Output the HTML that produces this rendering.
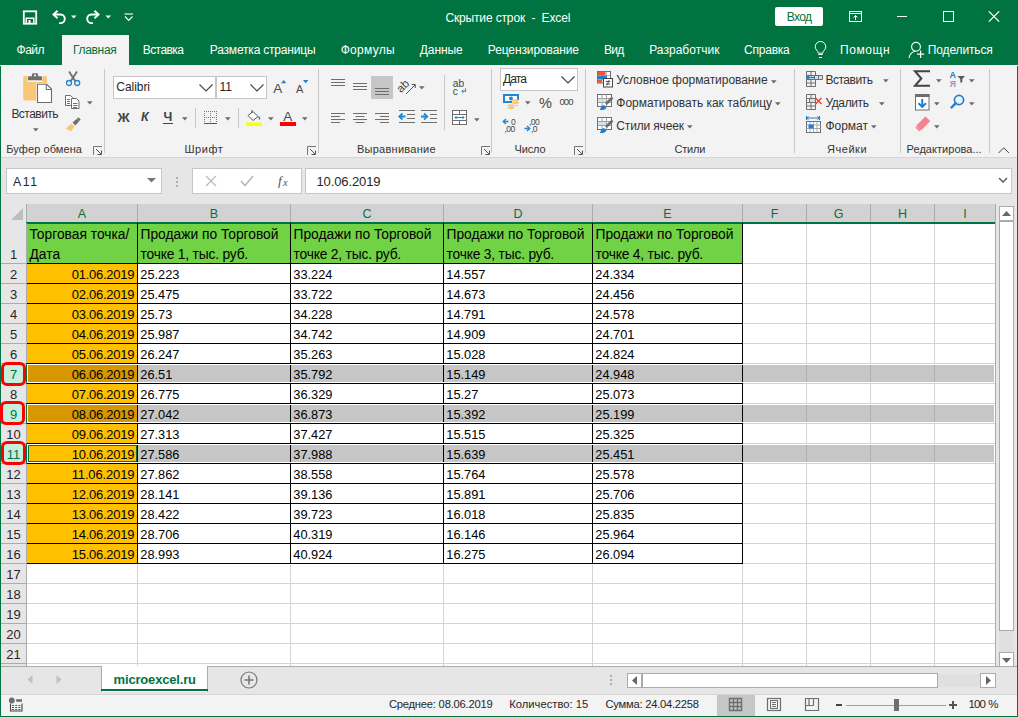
<!DOCTYPE html>
<html><head><meta charset="utf-8"><style>
html,body{margin:0;padding:0;}
body{width:1018px;height:717px;overflow:hidden;position:relative;background:#f3f3f3;font-family:"Liberation Sans", sans-serif;}
body>div, body>svg{position:absolute;box-sizing:border-box;}
.t{white-space:pre;}

</style></head><body>
<div style="left:0px;top:0px;width:1018px;height:65px;background:#017340;"></div>
<div style="left:0px;top:65px;width:1018px;height:92px;background:#f3f3f3;"></div>
<div style="left:0px;top:157px;width:1018px;height:1px;background:#d5d5d5;"></div>
<div style="left:0px;top:158px;width:1018px;height:508px;background:#e6e6e6;"></div>
<div style="left:0px;top:666px;width:1018px;height:28px;background:#e6e6e6;"></div>
<div style="left:0px;top:694px;width:1018px;height:1px;background:#d4d4d4;"></div>
<div style="left:0px;top:695px;width:1018px;height:22px;background:#f3f3f3;"></div>
<div class="t" style="left:445.40px;top:11.84px;font-size:12px;line-height:12px;color:#ffffff;font-weight:normal;font-style:normal;letter-spacing:-0.146px;font-family:'Liberation Sans', sans-serif;">Скрытие строк  -  Excel</div>
<svg style="left:22px;top:10px" width="16" height="15" viewBox="0 0 16 15"><rect x="1.8" y="1.3" width="12.4" height="12.4" fill="none" stroke="#fff" stroke-width="1.8"/><path d="M4.2 13.5V8.2h7.6v5.3" fill="none" stroke="#fff" stroke-width="1.5"/><rect x="6.5" y="10" width="2" height="3.5" fill="#fff"/></svg>
<svg style="left:51px;top:10px" width="28" height="15" viewBox="0 0 28 15"><path d="M2.5 4.5h7a4.3 4.3 0 0 1 0 8.6H8" fill="none" stroke="#fff" stroke-width="1.9"/><path d="M6.5 0.8L2.5 4.5l4 3.7" fill="none" stroke="#fff" stroke-width="1.9"/><path d="M20 5.5h5.5l-2.75 3z" fill="#fff"/></svg>
<svg style="left:85px;top:10px" width="28" height="15" viewBox="0 0 28 15"><path d="M13.5 4.5h-7a4.3 4.3 0 0 0 0 8.6H8" fill="none" stroke="#fff" stroke-width="1.9"/><path d="M9.5 0.8l4 3.7-4 3.7" fill="none" stroke="#fff" stroke-width="1.9"/><path d="M20.5 5.5h5.5l-2.75 3z" fill="#fff"/></svg>
<svg style="left:124px;top:13px" width="10" height="9" viewBox="0 0 10 9"><path d="M0.5 1h8.5" stroke="#fff" stroke-width="1.1"/><path d="M1 3.5l3.75 4 3.75-4" fill="none" stroke="#fff" stroke-width="1.1"/></svg>
<div style="left:775px;top:7px;width:48px;height:19px;background:#fff;border-radius:2px;"></div>
<div class="t" style="left:786.80px;top:10.64px;font-size:12px;line-height:12px;color:#017340;font-weight:normal;font-style:normal;letter-spacing:-0.652px;font-family:'Liberation Sans', sans-serif;">Вход</div>
<svg style="left:849px;top:11px" width="14" height="11" viewBox="0 0 14 11"><rect x="0.5" y="0.5" width="12" height="10" fill="none" stroke="#fff"/><path d="M0.5 2.5h12" stroke="#fff"/><path d="M6.5 9V4.5M4.5 6.5l2-2 2 2" fill="none" stroke="#fff"/></svg>
<div style="left:897px;top:16px;width:10px;height:1px;background:#fff;"></div>
<div style="left:943px;top:11px;width:11px;height:11px;border:1px solid #fff;"></div>
<svg style="left:988px;top:11px" width="12" height="11" viewBox="0 0 12 11"><path d="M0.8 0.3l10.4 10.4M11.2 0.3L0.8 10.7" stroke="#fff" stroke-width="1.1"/></svg>
<div style="left:62px;top:35px;width:67px;height:30px;background:#f3f3f3;"></div>
<div class="t" style="left:16.50px;top:43.84px;font-size:12px;line-height:12px;color:#ffffff;font-weight:normal;font-style:normal;letter-spacing:-0.472px;font-family:'Liberation Sans', sans-serif;">Файл</div>
<div class="t" style="left:73.00px;top:43.84px;font-size:12px;line-height:12px;color:#017340;font-weight:normal;font-style:normal;letter-spacing:-0.315px;font-family:'Liberation Sans', sans-serif;">Главная</div>
<div class="t" style="left:142.70px;top:43.84px;font-size:12px;line-height:12px;color:#ffffff;font-weight:normal;font-style:normal;letter-spacing:-0.552px;font-family:'Liberation Sans', sans-serif;">Вставка</div>
<div class="t" style="left:209.80px;top:43.84px;font-size:12px;line-height:12px;color:#ffffff;font-weight:normal;font-style:normal;letter-spacing:-0.192px;font-family:'Liberation Sans', sans-serif;">Разметка страницы</div>
<div class="t" style="left:340.70px;top:43.84px;font-size:12px;line-height:12px;color:#ffffff;font-weight:normal;font-style:normal;letter-spacing:0.297px;font-family:'Liberation Sans', sans-serif;">Формулы</div>
<div class="t" style="left:419.80px;top:43.84px;font-size:12px;line-height:12px;color:#ffffff;font-weight:normal;font-style:normal;letter-spacing:-0.072px;font-family:'Liberation Sans', sans-serif;">Данные</div>
<div class="t" style="left:487.80px;top:43.84px;font-size:12px;line-height:12px;color:#ffffff;font-weight:normal;font-style:normal;letter-spacing:-0.113px;font-family:'Liberation Sans', sans-serif;">Рецензирование</div>
<div class="t" style="left:604.00px;top:43.84px;font-size:12px;line-height:12px;color:#ffffff;font-weight:normal;font-style:normal;letter-spacing:-0.759px;font-family:'Liberation Sans', sans-serif;">Вид</div>
<div class="t" style="left:649.20px;top:43.84px;font-size:12px;line-height:12px;color:#ffffff;font-weight:normal;font-style:normal;letter-spacing:0.032px;font-family:'Liberation Sans', sans-serif;">Разработчик</div>
<div class="t" style="left:744.00px;top:43.84px;font-size:12px;line-height:12px;color:#ffffff;font-weight:normal;font-style:normal;letter-spacing:-0.213px;font-family:'Liberation Sans', sans-serif;">Справка</div>
<div class="t" style="left:840.00px;top:43.84px;font-size:12px;line-height:12px;color:#ffffff;font-weight:normal;font-style:normal;letter-spacing:0.593px;font-family:'Liberation Sans', sans-serif;">Помощн</div>
<div class="t" style="left:927.80px;top:43.84px;font-size:12px;line-height:12px;color:#ffffff;font-weight:normal;font-style:normal;letter-spacing:-0.141px;font-family:'Liberation Sans', sans-serif;">Поделиться</div>
<svg style="left:814px;top:41px" width="13" height="18" viewBox="0 0 13 18"><path d="M4.3 12.2C4.2 10 1.2 8.6 1.2 5.8a5.3 5.3 0 0 1 10.6 0c0 2.8-3 4.2-3.1 6.4z" fill="none" stroke="#fff" stroke-width="1"/><path d="M4.3 13.5h4.4M5 16.5h3" stroke="#fff" stroke-width="1.1"/></svg>
<svg style="left:908px;top:41px" width="17" height="18" viewBox="0 0 17 18"><circle cx="8" cy="5.8" r="4.4" fill="none" stroke="#fff" stroke-width="1.1"/><path d="M1 17c0.5-3.5 2.8-6 6-6.8" fill="none" stroke="#fff" stroke-width="1.1"/><path d="M12.6 9.5v7.5M9 13.2h7.2" stroke="#fff" stroke-width="1.2"/></svg>
<div style="left:104px;top:69px;width:1px;height:84px;background:#c8c8c8;"></div>
<div style="left:318px;top:69px;width:1px;height:84px;background:#c8c8c8;"></div>
<div style="left:491px;top:69px;width:1px;height:84px;background:#c8c8c8;"></div>
<div style="left:585px;top:69px;width:1px;height:84px;background:#c8c8c8;"></div>
<div style="left:794px;top:69px;width:1px;height:84px;background:#c8c8c8;"></div>
<div style="left:900px;top:69px;width:1px;height:84px;background:#c8c8c8;"></div>
<div style="left:989px;top:69px;width:1px;height:84px;background:#c8c8c8;"></div>
<div class="t" style="left:6.30px;top:143.69px;font-size:11px;line-height:11px;color:#333;font-weight:normal;font-style:normal;letter-spacing:0.086px;font-family:'Liberation Sans', sans-serif;">Буфер обмена</div>
<div class="t" style="left:184.50px;top:143.69px;font-size:11px;line-height:11px;color:#333;font-weight:normal;font-style:normal;letter-spacing:0.524px;font-family:'Liberation Sans', sans-serif;">Шрифт</div>
<div class="t" style="left:356.90px;top:143.69px;font-size:11px;line-height:11px;color:#333;font-weight:normal;font-style:normal;letter-spacing:0.271px;font-family:'Liberation Sans', sans-serif;">Выравнивание</div>
<div class="t" style="left:514.50px;top:143.69px;font-size:11px;line-height:11px;color:#333;font-weight:normal;font-style:normal;letter-spacing:-0.160px;font-family:'Liberation Sans', sans-serif;">Число</div>
<div class="t" style="left:674.40px;top:143.69px;font-size:11px;line-height:11px;color:#333;font-weight:normal;font-style:normal;letter-spacing:-0.151px;font-family:'Liberation Sans', sans-serif;">Стили</div>
<div class="t" style="left:827.10px;top:143.69px;font-size:11px;line-height:11px;color:#333;font-weight:normal;font-style:normal;letter-spacing:0.519px;font-family:'Liberation Sans', sans-serif;">Ячейки</div>
<div class="t" style="left:906.60px;top:143.69px;font-size:11px;line-height:11px;color:#333;font-weight:normal;font-style:normal;letter-spacing:0.035px;font-family:'Liberation Sans', sans-serif;">Редактирова...</div>
<svg style="left:93px;top:146px" width="10" height="10" viewBox="0 0 10 10"><path d="M0.5 9V0.5H9" fill="none" stroke="#777" stroke-width="1"/><path d="M3 3l5 5M4.5 8.5H8.5V4.5" fill="none" stroke="#555" stroke-width="1"/></svg>
<svg style="left:306.5px;top:146px" width="10" height="10" viewBox="0 0 10 10"><path d="M0.5 9V0.5H9" fill="none" stroke="#777" stroke-width="1"/><path d="M3 3l5 5M4.5 8.5H8.5V4.5" fill="none" stroke="#555" stroke-width="1"/></svg>
<svg style="left:480.5px;top:146px" width="10" height="10" viewBox="0 0 10 10"><path d="M0.5 9V0.5H9" fill="none" stroke="#777" stroke-width="1"/><path d="M3 3l5 5M4.5 8.5H8.5V4.5" fill="none" stroke="#555" stroke-width="1"/></svg>
<svg style="left:574px;top:146px" width="10" height="10" viewBox="0 0 10 10"><path d="M0.5 9V0.5H9" fill="none" stroke="#777" stroke-width="1"/><path d="M3 3l5 5M4.5 8.5H8.5V4.5" fill="none" stroke="#555" stroke-width="1"/></svg>
<svg style="left:998px;top:146px" width="12" height="8" viewBox="0 0 12 8"><path d="M0.5 7l5.2-5.2 5.2 5.2" fill="none" stroke="#444" stroke-width="1"/></svg>
<svg style="left:22px;top:72px" width="31" height="32" viewBox="0 0 31 32"><rect x="1.2" y="4" width="23.8" height="24.6" rx="1.5" fill="#f9c77a"/><path d="M5.5 3.2h15v6.8h-15z" fill="#f3f3f3"/><path d="M6 8.2V5.2Q6 4.2 7 4.2H10V2.2Q10 1.2 11 1.2H15Q16 1.2 16 2.2V4.2H19Q20 4.2 20 5.2V8.2z" fill="#6e6e6e"/><rect x="12" y="2.5" width="2" height="1.8" fill="#f3f3f3"/><path d="M14.2 11h11.5l5 5V32H14.2z" fill="#f3f3f3"/><path d="M15.5 12.3h9.2l4.8 4.8V30.5H15.5z" fill="#fff" stroke="#6e6e6e" stroke-width="1.1"/><path d="M24.3 12.3v5.2h5.2" fill="none" stroke="#6e6e6e" stroke-width="1.1"/></svg>
<div class="t" style="left:11.40px;top:107.84px;font-size:12px;line-height:12px;color:#333;font-weight:normal;font-style:normal;letter-spacing:-0.525px;font-family:'Liberation Sans', sans-serif;">Вставить</div>
<svg style="left:33px;top:128px" width="6" height="4" viewBox="0 0 6 4"><path d="M0 0.3h5.6L2.8 3.4z" fill="#6a6a6a"/></svg>
<svg style="left:65px;top:70px" width="16" height="17" viewBox="0 0 16 17"><path d="M4 1.5l6.5 10M12 1.5l-6.5 10" stroke="#6e6e6e" stroke-width="1.8"/><circle cx="4" cy="13" r="2.5" fill="none" stroke="#1e87d6" stroke-width="1.3"/><circle cx="12.2" cy="13" r="2.5" fill="none" stroke="#1e87d6" stroke-width="1.3"/></svg>
<svg style="left:64px;top:94px" width="17" height="16" viewBox="0 0 17 16"><path d="M1.5 1.5h5l2 2V11.5h-7z" fill="#fff" stroke="#6e6e6e"/><path d="M3 5.5h3M3 7.5h3M3 9.5h3" stroke="#1e87d6"/><path d="M7.5 4.5h5l2.5 2.5v7.5h-7.5z" fill="#fff" stroke="#6e6e6e"/><path d="M9 9.5h4.5M9 11.5h4.5M9 13.5h4" stroke="#1e87d6"/></svg>
<svg style="left:87px;top:101px" width="6" height="4" viewBox="0 0 6 4"><path d="M0 0.3h5.6L2.8 3.4z" fill="#6a6a6a"/></svg>
<svg style="left:65px;top:117px" width="17" height="16" viewBox="0 0 17 16"><path d="M12 1.5l1.5-1.2 2.2 2.2-1.2 1.5z" fill="#6e6e6e"/><path d="M7.5 5.5l4.5-3.8 2.3 2.3L10.5 8.5z" fill="#6e6e6e"/><path d="M6.5 6.5l3 3L6 14.5 0.8 11.5z" fill="#f9c77a"/></svg>
<div style="left:113px;top:76px;width:103px;height:23px;background:#fff;border:1px solid #c6c6c6;"></div>
<div style="left:216px;top:76px;width:51px;height:23px;background:#fff;border:1px solid #c6c6c6;"></div>
<div class="t" style="left:116.30px;top:81.44px;font-size:12px;line-height:12px;color:#262626;font-weight:normal;font-style:normal;letter-spacing:-0.053px;font-family:'Liberation Sans', sans-serif;">Calibri</div>
<div class="t" style="left:219.50px;top:81.44px;font-size:12px;line-height:12px;color:#262626;font-weight:normal;font-style:normal;font-family:'Liberation Sans', sans-serif;">11</div>
<svg style="left:199px;top:84px" width="14" height="8" viewBox="0 0 14 8"><path d="M0.5 0.5l6.5 6.5 6.5-6.5" fill="none" stroke="#444" stroke-width="1.1"/></svg>
<svg style="left:250px;top:84px" width="14" height="8" viewBox="0 0 14 8"><path d="M0.5 0.5l6.5 6.5 6.5-6.5" fill="none" stroke="#444" stroke-width="1.1"/></svg>
<div class="t" style="left:273.30px;top:81.57px;font-size:13.5px;line-height:13.5px;color:#4a4a4a;font-weight:normal;font-style:normal;font-family:'Liberation Sans', sans-serif;">A</div>
<svg style="left:281px;top:80px" width="6" height="4" viewBox="0 0 6 4"><path d="M0 3.2h5.4L2.7 0z" fill="#1e7fd2"/></svg>
<div class="t" style="left:296.00px;top:83.69px;font-size:11px;line-height:11px;color:#4a4a4a;font-weight:normal;font-style:normal;font-family:'Liberation Sans', sans-serif;">A</div>
<svg style="left:303px;top:80px" width="6" height="4" viewBox="0 0 6 4"><path d="M0 0h5.4L2.7 3.2z" fill="#1e7fd2"/></svg>
<div class="t" style="left:117.50px;top:110.57px;font-size:13.5px;line-height:13.5px;color:#444;font-weight:bold;font-style:normal;font-family:'Liberation Sans', sans-serif;">Ж</div>
<div class="t" style="left:141.00px;top:111.42px;font-size:12.5px;line-height:12.5px;color:#444;font-weight:bold;font-style:italic;font-family:'Liberation Sans', sans-serif;">К</div>
<div class="t" style="left:163.50px;top:111.42px;font-size:12.5px;line-height:12.5px;color:#444;font-weight:bold;font-style:normal;font-family:'Liberation Sans', sans-serif;">Ч</div>
<div style="left:163px;top:123px;width:10px;height:1px;background:#444;"></div>
<svg style="left:182px;top:117px" width="6" height="4" viewBox="0 0 6 4"><path d="M0 0.3h5.6L2.8 3.4z" fill="#6a6a6a"/></svg>
<div style="left:195px;top:108px;width:1px;height:20px;background:#c8c8c8;"></div>
<svg style="left:204px;top:111px" width="14" height="14" viewBox="0 0 14 14"><g fill="#777"><rect x="0" y="0" width="1" height="1"/><rect x="0" y="0" width="1" height="1"/><rect x="0" y="6" width="1" height="1"/><rect x="6" y="0" width="1" height="1"/><rect x="0" y="12" width="1" height="1"/><rect x="12" y="0" width="1" height="1"/><rect x="2" y="0" width="1" height="1"/><rect x="0" y="2" width="1" height="1"/><rect x="2" y="6" width="1" height="1"/><rect x="6" y="2" width="1" height="1"/><rect x="2" y="12" width="1" height="1"/><rect x="12" y="2" width="1" height="1"/><rect x="4" y="0" width="1" height="1"/><rect x="0" y="4" width="1" height="1"/><rect x="4" y="6" width="1" height="1"/><rect x="6" y="4" width="1" height="1"/><rect x="4" y="12" width="1" height="1"/><rect x="12" y="4" width="1" height="1"/><rect x="6" y="0" width="1" height="1"/><rect x="0" y="6" width="1" height="1"/><rect x="6" y="6" width="1" height="1"/><rect x="6" y="6" width="1" height="1"/><rect x="6" y="12" width="1" height="1"/><rect x="12" y="6" width="1" height="1"/><rect x="8" y="0" width="1" height="1"/><rect x="0" y="8" width="1" height="1"/><rect x="8" y="6" width="1" height="1"/><rect x="6" y="8" width="1" height="1"/><rect x="8" y="12" width="1" height="1"/><rect x="12" y="8" width="1" height="1"/><rect x="10" y="0" width="1" height="1"/><rect x="0" y="10" width="1" height="1"/><rect x="10" y="6" width="1" height="1"/><rect x="6" y="10" width="1" height="1"/><rect x="10" y="12" width="1" height="1"/><rect x="12" y="10" width="1" height="1"/><rect x="12" y="0" width="1" height="1"/><rect x="0" y="12" width="1" height="1"/><rect x="12" y="6" width="1" height="1"/><rect x="6" y="12" width="1" height="1"/><rect x="12" y="12" width="1" height="1"/><rect x="12" y="12" width="1" height="1"/></g><path d="M0 12.5h13" stroke="#555"/></svg>
<svg style="left:225px;top:117px" width="6" height="4" viewBox="0 0 6 4"><path d="M0 0.3h5.6L2.8 3.4z" fill="#6a6a6a"/></svg>
<div style="left:238px;top:108px;width:1px;height:20px;background:#c8c8c8;"></div>
<svg style="left:245px;top:109px" width="18" height="18" viewBox="0 0 18 18"><path d="M7 1v3M3 6.5l5-4 5 5-5 4z" fill="#fff" stroke="#555" stroke-width="1"/><path d="M13.5 7.5c1 1 1.5 2 1 3" stroke="#2b88d8" stroke-width="1.6" fill="none"/><rect x="1" y="13.5" width="16" height="3.5" fill="#ffff00"/></svg>
<svg style="left:267.5px;top:117px" width="6" height="4" viewBox="0 0 6 4"><path d="M0 0.3h5.6L2.8 3.4z" fill="#6a6a6a"/></svg>
<div class="t" style="left:283.20px;top:110.07px;font-size:13.5px;line-height:13.5px;color:#4a4a4a;font-weight:normal;font-style:normal;font-family:'Liberation Sans', sans-serif;">A</div>
<div style="left:280px;top:122px;width:16px;height:4px;background:#ff0000;"></div>
<svg style="left:301.5px;top:117px" width="6" height="4" viewBox="0 0 6 4"><path d="M0 0.3h5.6L2.8 3.4z" fill="#6a6a6a"/></svg>
<svg style="left:331px;top:76px" width="16" height="20" viewBox="0 0 16 20"><path d="M0 3.5h14M0 6.5h14M0 9.5h14" stroke="#6e6e6e" stroke-width="1" fill="none"/></svg>
<svg style="left:353px;top:80px" width="16" height="20" viewBox="0 0 16 20"><path d="M0 3.5h14M0 6.5h14M0 9.5h14" stroke="#6e6e6e" stroke-width="1" fill="none"/></svg>
<div style="left:371px;top:76px;width:22px;height:23px;background:#c6c6c6;"></div>
<svg style="left:375px;top:85px" width="16" height="20" viewBox="0 0 16 20"><path d="M0 3.5h14M0 6.5h14M0 9.5h14" stroke="#6e6e6e" stroke-width="1" fill="none"/></svg>
<svg style="left:394px;top:74px" width="34" height="23" viewBox="0 0 34 23"><text x="2" y="15" font-family="Liberation Sans" font-size="11.5" fill="#444" transform="rotate(-45 9.5 11)" letter-spacing="-0.2">ab</text><path d="M12 20L21 11" stroke="#555" stroke-width="1" fill="none"/><path d="M17.8 10.5h3.5v3.5" stroke="#555" stroke-width="1" fill="none"/></svg>
<svg style="left:419px;top:85.5px" width="6" height="4" viewBox="0 0 6 4"><path d="M0 0.3h5.6L2.8 3.4z" fill="#6a6a6a"/></svg>
<svg style="left:331px;top:110px" width="16" height="20" viewBox="0 0 16 20"><path d="M0 3.5h14M0 6.5h9M0 9.5h14M0 12.5h9" stroke="#6e6e6e" stroke-width="1" fill="none"/></svg>
<svg style="left:353px;top:110px" width="16" height="20" viewBox="0 0 16 20"><path d="M0 3.5h14M2.5 6.5h9M0 9.5h14M2.5 12.5h9" stroke="#6e6e6e" stroke-width="1" fill="none"/></svg>
<svg style="left:375px;top:110px" width="16" height="20" viewBox="0 0 16 20"><path d="M0 3.5h14M5 6.5h9M0 9.5h14M5 12.5h9" stroke="#6e6e6e" stroke-width="1" fill="none"/></svg>
<svg style="left:398px;top:110px" width="18" height="16" viewBox="0 0 18 16"><path d="M1 0.5h16M9 4.5h8M9 8.5h8M1 12.5h16" stroke="#6e6e6e" fill="none"/><path d="M2 6.5h5.5" stroke="#1e87d6" stroke-width="2" fill="none"/><path d="M4.5 3.5L1.2 6.5l3.3 3" stroke="#1e87d6" stroke-width="1.7" fill="none"/></svg>
<svg style="left:420px;top:110px" width="18" height="16" viewBox="0 0 18 16"><path d="M1 0.5h16M10 4.5h7M10 8.5h7M1 12.5h16" stroke="#6e6e6e" fill="none"/><path d="M1 6.5h5.5" stroke="#1e87d6" stroke-width="2" fill="none"/><path d="M4 3.5l3.3 3-3.3 3" stroke="#1e87d6" stroke-width="1.7" fill="none"/></svg>
<div style="left:444px;top:75px;width:1px;height:55px;background:#c8c8c8;"></div>
<svg style="left:452px;top:78px" width="17" height="18" viewBox="0 0 17 18"><text x="0.8" y="9" font-family="Liberation Sans" font-size="10.2" fill="#444" letter-spacing="0">ab</text><text x="0.8" y="16.6" font-family="Liberation Sans" font-size="10.2" fill="#444">c</text><path d="M13.5 10.5v2.8h-3.5" stroke="#1e7fd2" stroke-width="1.1" fill="none"/><path d="M11.3 11.9L9.8 13.3l1.5 1.5" stroke="#1e7fd2" stroke-width="1" fill="none"/></svg>
<svg style="left:451px;top:109px" width="17" height="17" viewBox="0 0 17 17"><rect x="1.5" y="1.5" width="14" height="14" fill="#fff" stroke="#6e6e6e"/><path d="M1.5 5.5h14M1.5 11.5h14M8.5 1.5v4M8.5 11.5v4" stroke="#6e6e6e"/><path d="M4 8.5h9" stroke="#1e87d6" stroke-width="1.1"/><path d="M5.5 7L4 8.5 5.5 10M11.5 7l1.5 1.5-1.5 1.5" stroke="#1e87d6" fill="none"/></svg>
<svg style="left:474px;top:117.5px" width="6" height="4" viewBox="0 0 6 4"><path d="M0 0.3h5.6L2.8 3.4z" fill="#6a6a6a"/></svg>
<div style="left:500px;top:68px;width:78px;height:23px;background:#fff;border:1px solid #c6c6c6;"></div>
<div class="t" style="left:503.00px;top:73.34px;font-size:12px;line-height:12px;color:#262626;font-weight:normal;font-style:normal;letter-spacing:-0.859px;font-family:'Liberation Sans', sans-serif;">Дата</div>
<svg style="left:561px;top:76px" width="14" height="8" viewBox="0 0 14 8"><path d="M0.5 0.5l6.5 6.5 6.5-6.5" fill="none" stroke="#444" stroke-width="1.1"/></svg>
<svg style="left:503px;top:94px" width="17" height="17" viewBox="0 0 17 17"><path d="M0 0h16v9H0z" fill="#1e87d6"/><path d="M2 2h12v5H2z" fill="#fff"/><circle cx="8" cy="4.5" r="2" fill="#1e87d6"/><path d="M9 6h8v7H9z" fill="#f3f3f3"/><ellipse cx="12.5" cy="6.5" rx="3.5" ry="1.2" fill="#f9c77a"/><ellipse cx="12.5" cy="8.8" rx="3.5" ry="1.2" fill="#f9c77a"/><ellipse cx="8" cy="11.5" rx="3.5" ry="1.2" fill="#f9c77a"/><ellipse cx="8" cy="13.8" rx="3.5" ry="1.2" fill="#f9c77a"/><path d="M12 11.5h3.5" stroke="#f9c77a" stroke-width="1.2"/></svg>
<svg style="left:525px;top:101px" width="6" height="4" viewBox="0 0 6 4"><path d="M0 0.3h5.6L2.8 3.4z" fill="#6a6a6a"/></svg>
<div class="t" style="left:539.00px;top:95.73px;font-size:14.5px;line-height:14.5px;color:#444;font-weight:normal;font-style:normal;font-family:'Liberation Sans', sans-serif;">%</div>
<div class="t" style="left:559.50px;top:96.96px;font-size:9.5px;line-height:9.5px;color:#444;font-weight:normal;font-style:normal;letter-spacing:-0.930px;font-family:'Liberation Sans', sans-serif;">000</div>
<svg style="left:502px;top:117px" width="18" height="17" viewBox="0 0 18 17"><text x="9" y="8" font-family="Liberation Sans" font-size="8.5" fill="#444">0</text><text x="2.5" y="15" font-family="Liberation Sans" font-size="8.5" fill="#444" letter-spacing="-0.5">,00</text><path d="M1.5 4.5h5" stroke="#1e87d6" stroke-width="1.6"/><path d="M4 2L1.3 4.5 4 7" stroke="#1e87d6" stroke-width="1.4" fill="none"/></svg>
<svg style="left:524px;top:117px" width="18" height="17" viewBox="0 0 18 17"><text x="5" y="8" font-family="Liberation Sans" font-size="8.5" fill="#444" letter-spacing="-0.5">,00</text><text x="7" y="15" font-family="Liberation Sans" font-size="8.5" fill="#444" letter-spacing="-0.5">,0</text><path d="M0.5 11.5h5" stroke="#1e87d6" stroke-width="1.6"/><path d="M3 9l2.7 2.5L3 14" stroke="#1e87d6" stroke-width="1.4" fill="none"/></svg>
<div class="t" style="left:616.30px;top:74.34px;font-size:12px;line-height:12px;color:#333;font-weight:normal;font-style:normal;letter-spacing:-0.058px;font-family:'Liberation Sans', sans-serif;">Условное форматирование</div>
<svg style="left:770.8px;top:79.5px" width="6" height="4" viewBox="0 0 6 4"><path d="M0 0.3h5.6L2.8 3.4z" fill="#6a6a6a"/></svg>
<div class="t" style="left:616.30px;top:97.34px;font-size:12px;line-height:12px;color:#333;font-weight:normal;font-style:normal;letter-spacing:-0.018px;font-family:'Liberation Sans', sans-serif;">Форматировать как таблицу</div>
<svg style="left:775px;top:102px" width="6" height="4" viewBox="0 0 6 4"><path d="M0 0.3h5.6L2.8 3.4z" fill="#6a6a6a"/></svg>
<div class="t" style="left:616.30px;top:120.34px;font-size:12px;line-height:12px;color:#333;font-weight:normal;font-style:normal;letter-spacing:-0.157px;font-family:'Liberation Sans', sans-serif;">Стили ячеек</div>
<svg style="left:687.4px;top:125px" width="6" height="4" viewBox="0 0 6 4"><path d="M0 0.3h5.6L2.8 3.4z" fill="#6a6a6a"/></svg>
<svg style="left:596px;top:70px" width="18" height="18" viewBox="0 0 18 18"><rect x="1.5" y="1.5" width="13" height="11.5" fill="#fff" stroke="#6e6e6e"/><path d="M6 1.5v11.5M10.5 1.5v11.5M1.5 5.5h13M1.5 9.5h13" stroke="#9a9a9a" stroke-width="0.8"/><rect x="2" y="2" width="7.5" height="3.3" fill="#f0553a"/><rect x="2" y="5.8" width="9" height="3.3" fill="#1e7fd2"/><rect x="2" y="9.8" width="4" height="3" fill="#f0553a"/><rect x="7.5" y="8.5" width="9" height="8.5" fill="#fff" stroke="#444"/><path d="M9.8 11.5h4.5M9.8 14h4.5M13.2 10l-2.3 5.5" stroke="#444" stroke-width="0.9"/></svg>
<svg style="left:596px;top:93px" width="18" height="18" viewBox="0 0 18 18"><rect x="1.5" y="1.5" width="14" height="12" fill="#fff" stroke="#6e6e6e"/><path d="M1.5 5.5h14M1.5 9.5h14M6 1.5v12M10.5 1.5v12" stroke="#9a9a9a" stroke-width="0.9"/><rect x="6.5" y="6" width="3.5" height="3" fill="#cfe3ef"/><rect x="2" y="6" width="3.5" height="3" fill="#cfe3ef"/><path d="M16.5 4.5L10 11" stroke="#6e6e6e" stroke-width="2.6"/><path d="M4 17c0.5-3 2-4.5 4-5l2.5 2.5c-1 2-3.5 2.8-6.5 2.5z" fill="#1e7fd2"/></svg>
<svg style="left:596px;top:116px" width="18" height="18" viewBox="0 0 18 18"><rect x="1.5" y="1.5" width="14" height="12" fill="#fff" stroke="#6e6e6e"/><path d="M1.5 5.5h14M1.5 9.5h14M6 1.5v12M10.5 1.5v12" stroke="#9a9a9a" stroke-width="0.9"/><rect x="6.5" y="6" width="3.5" height="3" fill="#cfe3ef"/><rect x="2" y="6" width="3.5" height="3" fill="#cfe3ef"/><path d="M16.5 4.5L10 11" stroke="#6e6e6e" stroke-width="2.6"/><path d="M4 17c0.5-3 2-4.5 4-5l2.5 2.5c-1 2-3.5 2.8-6.5 2.5z" fill="#1e7fd2"/></svg>
<div class="t" style="left:825.40px;top:74.34px;font-size:12px;line-height:12px;color:#333;font-weight:normal;font-style:normal;letter-spacing:-0.482px;font-family:'Liberation Sans', sans-serif;">Вставить</div>
<svg style="left:883px;top:79px" width="6" height="4" viewBox="0 0 6 4"><path d="M0 0.3h5.6L2.8 3.4z" fill="#6a6a6a"/></svg>
<div class="t" style="left:825.40px;top:97.34px;font-size:12px;line-height:12px;color:#333;font-weight:normal;font-style:normal;letter-spacing:-0.371px;font-family:'Liberation Sans', sans-serif;">Удалить</div>
<svg style="left:879px;top:101.5px" width="6" height="4" viewBox="0 0 6 4"><path d="M0 0.3h5.6L2.8 3.4z" fill="#6a6a6a"/></svg>
<div class="t" style="left:825.40px;top:120.34px;font-size:12px;line-height:12px;color:#333;font-weight:normal;font-style:normal;letter-spacing:-0.008px;font-family:'Liberation Sans', sans-serif;">Формат</div>
<svg style="left:871px;top:124.5px" width="6" height="4" viewBox="0 0 6 4"><path d="M0 0.3h5.6L2.8 3.4z" fill="#6a6a6a"/></svg>
<svg style="left:805px;top:70px" width="18" height="18" viewBox="0 0 18 18"><path d="M1.5 1.5h9v4h-9zM1.5 5.5v4h9M1.5 9.5v7h9v-7M1.5 13h9M6 1.5v4M6 9.5v7" fill="none" stroke="#6e6e6e"/><path d="M9.5 5.5h8v4h-8z" fill="#cfe3ef" stroke="#6e6e6e"/><path d="M13.5 5.5v4" stroke="#6e6e6e"/><path d="M2 7.5h7" stroke="#1e7fd2" stroke-width="1.6"/><path d="M4.5 5L2 7.5 4.5 10" stroke="#1e7fd2" stroke-width="1.5" fill="none"/></svg>
<svg style="left:805px;top:93px" width="18" height="18" viewBox="0 0 18 18"><path d="M1.5 1.5h9v4h-9zM1.5 5.5v4h9M1.5 9.5v7h9v-7M1.5 13h9M6 1.5v4M6 9.5v7" fill="none" stroke="#6e6e6e"/><path d="M4.5 5.5h6v4h-6z" fill="#cfe3ef" stroke="#6e6e6e"/><path d="M10.5 5l6 6M16.5 5l-6 6" stroke="#f0443a" stroke-width="1.5"/></svg>
<svg style="left:805px;top:116px" width="18" height="18" viewBox="0 0 18 18"><path d="M1.5 0v4M14.5 0v4M2 2h12" stroke="#1e7fd2" stroke-width="1.1"/><path d="M3.5 0.3L1.8 2l1.7 1.7M12.5 0.3L14.2 2l-1.7 1.7" stroke="#1e7fd2" fill="none"/><rect x="1.5" y="5.5" width="14" height="11" fill="#fff" stroke="#6e6e6e"/><path d="M1.5 9h14M1.5 12.5h14M5 5.5v11M8.5 5.5v11M12 5.5v11" stroke="#9a9a9a" stroke-width="0.8"/><rect x="3.5" y="8.5" width="5" height="4" fill="#1e7fd2"/></svg>
<svg style="left:913px;top:70px" width="17" height="17" viewBox="0 0 17 17"><path d="M16 2.2V1.2H2l6.3 7.3L2 15.8h14V14.8" fill="none" stroke="#444" stroke-width="2"/></svg>
<svg style="left:935.5px;top:78.5px" width="6" height="4" viewBox="0 0 6 4"><path d="M0 0.3h5.6L2.8 3.4z" fill="#6a6a6a"/></svg>
<svg style="left:949px;top:70px" width="17" height="18" viewBox="0 0 17 18"><text x="0.5" y="8" font-family="Liberation Sans" font-weight="bold" font-size="9" fill="#1e7fd2">A</text><text x="0.8" y="17" font-family="Liberation Sans" font-weight="bold" font-size="8.5" fill="#a58ac0">Я</text><path d="M8.5 6h7.5l-2.7 3v3.5l-2 0V9z" fill="#5a5a5a"/></svg>
<svg style="left:969px;top:78.5px" width="6" height="4" viewBox="0 0 6 4"><path d="M0 0.3h5.6L2.8 3.4z" fill="#6a6a6a"/></svg>
<svg style="left:914px;top:93px" width="16" height="18" viewBox="0 0 16 18"><rect x="1.5" y="1.5" width="13.5" height="15.5" fill="#fff" stroke="#6e6e6e"/><rect x="1" y="1" width="14.5" height="3" fill="#6e6e6e"/><path d="M8.2 6v8" stroke="#1e7fd2" stroke-width="2"/><path d="M4.5 10.2l3.7 3.7 3.7-3.7" stroke="#1e7fd2" stroke-width="2" fill="none"/></svg>
<svg style="left:934px;top:101.5px" width="6" height="4" viewBox="0 0 6 4"><path d="M0 0.3h5.6L2.8 3.4z" fill="#6a6a6a"/></svg>
<svg style="left:950px;top:94px" width="15" height="15" viewBox="0 0 15 15"><circle cx="9" cy="6" r="4.6" fill="none" stroke="#1e7fd2" stroke-width="1.7"/><path d="M5.8 9.2L1.5 13.5" stroke="#1e7fd2" stroke-width="2.4" stroke-linecap="round"/></svg>
<svg style="left:969px;top:101.5px" width="6" height="4" viewBox="0 0 6 4"><path d="M0 0.3h5.6L2.8 3.4z" fill="#6a6a6a"/></svg>
<svg style="left:914px;top:116px" width="17" height="16" viewBox="0 0 17 16"><path d="M11.5 1.2l4 4-8.5 8.5-4-4z" fill="#f4838f" stroke="#f4838f" stroke-linejoin="round" stroke-width="1.2"/><path d="M2.5 10.2l4 4-1.2 1.2-4-4z" fill="#f4838f"/></svg>
<svg style="left:934px;top:124.5px" width="6" height="4" viewBox="0 0 6 4"><path d="M0 0.3h5.6L2.8 3.4z" fill="#6a6a6a"/></svg>
<div style="left:6px;top:168px;width:156px;height:26px;background:#fff;border:1px solid #c6c6c6;"></div>
<div class="t" style="left:13.00px;top:175.89px;font-size:12.3px;line-height:12.3px;color:#262626;font-weight:normal;font-style:normal;letter-spacing:1.516px;font-family:'Liberation Sans', sans-serif;">A11</div>
<svg style="left:147px;top:178px" width="9" height="5" viewBox="0 0 9 5"><path d="M0 0h9L4.5 4.5z" fill="#777"/></svg>
<div style="left:176px;top:177px;width:2px;height:2px;background:#9b9b9b;border-radius:1px;"></div>
<div style="left:176px;top:181px;width:2px;height:2px;background:#9b9b9b;border-radius:1px;"></div>
<div style="left:176px;top:185px;width:2px;height:2px;background:#9b9b9b;border-radius:1px;"></div>
<div style="left:192px;top:168px;width:110px;height:26px;background:#fff;border:1px solid #c6c6c6;"></div>
<svg style="left:205px;top:175px" width="12" height="12" viewBox="0 0 12 12"><path d="M1 1l10 10M11 1L1 11" stroke="#b8b8b8" stroke-width="1.2"/></svg>
<svg style="left:240px;top:175px" width="14" height="12" viewBox="0 0 14 12"><path d="M1 6l4 4.5L13 1" stroke="#b8b8b8" stroke-width="1.6" fill="none"/></svg>
<div class="t" style="left:278.00px;top:174.07px;font-size:13.5px;line-height:13.5px;color:#555;font-weight:normal;font-style:italic;font-family:'Liberation Serif', serif;">f</div>
<div class="t" style="left:283.00px;top:177.61px;font-size:10.5px;line-height:10.5px;color:#555;font-weight:normal;font-style:italic;font-family:'Liberation Serif', serif;">x</div>
<div style="left:305px;top:168px;width:707px;height:26px;background:#fff;border:1px solid #c6c6c6;"></div>
<div class="t" style="left:316.50px;top:175.30px;font-size:13px;line-height:13px;color:#262626;font-weight:normal;font-style:normal;letter-spacing:-0.120px;font-family:'Liberation Sans', sans-serif;">10.06.2019</div>
<svg style="left:998px;top:177px" width="10" height="6" viewBox="0 0 10 6"><path d="M1 1l4 4 4-4" stroke="#666" stroke-width="1.6" fill="none"/></svg>
<div style="left:27px;top:224px;width:968px;height:442px;background:#fff;"></div>
<div style="left:1px;top:204px;width:994px;height:18px;background:#d2d2d2;"></div>
<div style="left:1px;top:204px;width:25px;height:18px;background:#e6e6e6;"></div>
<svg style="left:11px;top:208px" width="13" height="12" viewBox="0 0 13 12"><path d="M12 0V12H0z" fill="#bdbdbd"/></svg>
<div style="left:26px;top:222px;width:969px;height:2px;background:#017340;"></div>
<div style="left:1px;top:223px;width:25px;height:1px;background:#ababab;"></div>
<div style="left:137px;top:204px;width:1px;height:18px;background:#ababab;"></div>
<div class="t" style="left:77.83px;top:208.22px;font-size:12.5px;line-height:12.5px;color:#0f6e3f;font-weight:normal;font-style:normal;font-family:'Liberation Sans', sans-serif;">A</div>
<div style="left:290px;top:204px;width:1px;height:18px;background:#ababab;"></div>
<div class="t" style="left:209.83px;top:208.22px;font-size:12.5px;line-height:12.5px;color:#0f6e3f;font-weight:normal;font-style:normal;font-family:'Liberation Sans', sans-serif;">B</div>
<div style="left:443px;top:204px;width:1px;height:18px;background:#ababab;"></div>
<div class="t" style="left:362.48px;top:208.22px;font-size:12.5px;line-height:12.5px;color:#0f6e3f;font-weight:normal;font-style:normal;font-family:'Liberation Sans', sans-serif;">C</div>
<div style="left:592px;top:204px;width:1px;height:18px;background:#ababab;"></div>
<div class="t" style="left:513.48px;top:208.22px;font-size:12.5px;line-height:12.5px;color:#0f6e3f;font-weight:normal;font-style:normal;font-family:'Liberation Sans', sans-serif;">D</div>
<div style="left:742px;top:204px;width:1px;height:18px;background:#ababab;"></div>
<div class="t" style="left:663.33px;top:208.22px;font-size:12.5px;line-height:12.5px;color:#0f6e3f;font-weight:normal;font-style:normal;font-family:'Liberation Sans', sans-serif;">E</div>
<div style="left:806px;top:204px;width:1px;height:18px;background:#ababab;"></div>
<div class="t" style="left:770.68px;top:208.22px;font-size:12.5px;line-height:12.5px;color:#0f6e3f;font-weight:normal;font-style:normal;font-family:'Liberation Sans', sans-serif;">F</div>
<div style="left:870px;top:204px;width:1px;height:18px;background:#ababab;"></div>
<div class="t" style="left:833.63px;top:208.22px;font-size:12.5px;line-height:12.5px;color:#0f6e3f;font-weight:normal;font-style:normal;font-family:'Liberation Sans', sans-serif;">G</div>
<div style="left:934px;top:204px;width:1px;height:18px;background:#ababab;"></div>
<div class="t" style="left:897.98px;top:208.22px;font-size:12.5px;line-height:12.5px;color:#0f6e3f;font-weight:normal;font-style:normal;font-family:'Liberation Sans', sans-serif;">H</div>
<div style="left:995px;top:204px;width:1px;height:18px;background:#ababab;"></div>
<div class="t" style="left:963.26px;top:208.22px;font-size:12.5px;line-height:12.5px;color:#0f6e3f;font-weight:normal;font-style:normal;font-family:'Liberation Sans', sans-serif;">I</div>
<div style="left:26px;top:204px;width:1px;height:18px;background:#ababab;"></div>
<div style="left:1px;top:223px;width:25px;height:443px;background:#e6e6e6;"></div>
<div style="left:26px;top:223px;width:1px;height:443px;background:#ababab;"></div>
<div style="left:1px;top:263px;width:25px;height:1px;background:#ababab;"></div>
<div class="t" style="left:9.88px;top:248.00px;font-size:13px;line-height:13px;color:#262626;font-weight:normal;font-style:normal;font-family:'Liberation Sans', sans-serif;">1</div>
<div style="left:1px;top:283px;width:25px;height:1px;background:#ababab;"></div>
<div class="t" style="left:9.88px;top:267.50px;font-size:13px;line-height:13px;color:#262626;font-weight:normal;font-style:normal;font-family:'Liberation Sans', sans-serif;">2</div>
<div style="left:1px;top:303px;width:25px;height:1px;background:#ababab;"></div>
<div class="t" style="left:9.88px;top:287.50px;font-size:13px;line-height:13px;color:#262626;font-weight:normal;font-style:normal;font-family:'Liberation Sans', sans-serif;">3</div>
<div style="left:1px;top:323px;width:25px;height:1px;background:#ababab;"></div>
<div class="t" style="left:9.88px;top:307.50px;font-size:13px;line-height:13px;color:#262626;font-weight:normal;font-style:normal;font-family:'Liberation Sans', sans-serif;">4</div>
<div style="left:1px;top:343px;width:25px;height:1px;background:#ababab;"></div>
<div class="t" style="left:9.88px;top:327.50px;font-size:13px;line-height:13px;color:#262626;font-weight:normal;font-style:normal;font-family:'Liberation Sans', sans-serif;">5</div>
<div style="left:1px;top:363px;width:25px;height:1px;background:#ababab;"></div>
<div class="t" style="left:9.88px;top:347.50px;font-size:13px;line-height:13px;color:#262626;font-weight:normal;font-style:normal;font-family:'Liberation Sans', sans-serif;">6</div>
<div style="left:1px;top:383px;width:25px;height:1px;background:#ababab;"></div>
<div style="left:1px;top:364px;width:25px;height:19px;background:#c6efe0;"></div>
<div style="left:26px;top:363px;width:1px;height:21px;background:#017340;"></div>
<div class="t" style="left:9.88px;top:367.50px;font-size:13px;line-height:13px;color:#017340;font-weight:normal;font-style:normal;font-family:'Liberation Sans', sans-serif;">7</div>
<div style="left:1px;top:403px;width:25px;height:1px;background:#ababab;"></div>
<div class="t" style="left:9.88px;top:387.50px;font-size:13px;line-height:13px;color:#262626;font-weight:normal;font-style:normal;font-family:'Liberation Sans', sans-serif;">8</div>
<div style="left:1px;top:423px;width:25px;height:1px;background:#ababab;"></div>
<div style="left:1px;top:404px;width:25px;height:19px;background:#c6efe0;"></div>
<div style="left:26px;top:403px;width:1px;height:21px;background:#017340;"></div>
<div class="t" style="left:9.88px;top:407.50px;font-size:13px;line-height:13px;color:#017340;font-weight:normal;font-style:normal;font-family:'Liberation Sans', sans-serif;">9</div>
<div style="left:1px;top:443px;width:25px;height:1px;background:#ababab;"></div>
<div class="t" style="left:6.27px;top:427.50px;font-size:13px;line-height:13px;color:#262626;font-weight:normal;font-style:normal;font-family:'Liberation Sans', sans-serif;">10</div>
<div style="left:1px;top:463px;width:25px;height:1px;background:#ababab;"></div>
<div style="left:1px;top:444px;width:25px;height:19px;background:#c6efe0;"></div>
<div style="left:26px;top:443px;width:1px;height:21px;background:#017340;"></div>
<div class="t" style="left:6.75px;top:447.50px;font-size:13px;line-height:13px;color:#017340;font-weight:normal;font-style:normal;font-family:'Liberation Sans', sans-serif;">11</div>
<div style="left:1px;top:483px;width:25px;height:1px;background:#ababab;"></div>
<div class="t" style="left:6.27px;top:467.50px;font-size:13px;line-height:13px;color:#262626;font-weight:normal;font-style:normal;font-family:'Liberation Sans', sans-serif;">12</div>
<div style="left:1px;top:503px;width:25px;height:1px;background:#ababab;"></div>
<div class="t" style="left:6.27px;top:487.50px;font-size:13px;line-height:13px;color:#262626;font-weight:normal;font-style:normal;font-family:'Liberation Sans', sans-serif;">13</div>
<div style="left:1px;top:523px;width:25px;height:1px;background:#ababab;"></div>
<div class="t" style="left:6.27px;top:507.50px;font-size:13px;line-height:13px;color:#262626;font-weight:normal;font-style:normal;font-family:'Liberation Sans', sans-serif;">14</div>
<div style="left:1px;top:543px;width:25px;height:1px;background:#ababab;"></div>
<div class="t" style="left:6.27px;top:527.50px;font-size:13px;line-height:13px;color:#262626;font-weight:normal;font-style:normal;font-family:'Liberation Sans', sans-serif;">15</div>
<div style="left:1px;top:563px;width:25px;height:1px;background:#ababab;"></div>
<div class="t" style="left:6.27px;top:547.50px;font-size:13px;line-height:13px;color:#262626;font-weight:normal;font-style:normal;font-family:'Liberation Sans', sans-serif;">16</div>
<div style="left:1px;top:583px;width:25px;height:1px;background:#ababab;"></div>
<div class="t" style="left:6.27px;top:567.50px;font-size:13px;line-height:13px;color:#262626;font-weight:normal;font-style:normal;font-family:'Liberation Sans', sans-serif;">17</div>
<div style="left:1px;top:603px;width:25px;height:1px;background:#ababab;"></div>
<div class="t" style="left:6.27px;top:587.50px;font-size:13px;line-height:13px;color:#262626;font-weight:normal;font-style:normal;font-family:'Liberation Sans', sans-serif;">18</div>
<div style="left:1px;top:623px;width:25px;height:1px;background:#ababab;"></div>
<div class="t" style="left:6.27px;top:607.50px;font-size:13px;line-height:13px;color:#262626;font-weight:normal;font-style:normal;font-family:'Liberation Sans', sans-serif;">19</div>
<div style="left:1px;top:643px;width:25px;height:1px;background:#ababab;"></div>
<div class="t" style="left:6.27px;top:627.50px;font-size:13px;line-height:13px;color:#262626;font-weight:normal;font-style:normal;font-family:'Liberation Sans', sans-serif;">20</div>
<div style="left:1px;top:663px;width:25px;height:1px;background:#ababab;"></div>
<div class="t" style="left:6.27px;top:647.50px;font-size:13px;line-height:13px;color:#262626;font-weight:normal;font-style:normal;font-family:'Liberation Sans', sans-serif;">21</div>
<div style="left:27px;top:263px;width:968px;height:1px;background:#d4d4d4;"></div>
<div style="left:27px;top:283px;width:968px;height:1px;background:#d4d4d4;"></div>
<div style="left:27px;top:303px;width:968px;height:1px;background:#d4d4d4;"></div>
<div style="left:27px;top:323px;width:968px;height:1px;background:#d4d4d4;"></div>
<div style="left:27px;top:343px;width:968px;height:1px;background:#d4d4d4;"></div>
<div style="left:27px;top:363px;width:968px;height:1px;background:#d4d4d4;"></div>
<div style="left:27px;top:383px;width:968px;height:1px;background:#d4d4d4;"></div>
<div style="left:27px;top:403px;width:968px;height:1px;background:#d4d4d4;"></div>
<div style="left:27px;top:423px;width:968px;height:1px;background:#d4d4d4;"></div>
<div style="left:27px;top:443px;width:968px;height:1px;background:#d4d4d4;"></div>
<div style="left:27px;top:463px;width:968px;height:1px;background:#d4d4d4;"></div>
<div style="left:27px;top:483px;width:968px;height:1px;background:#d4d4d4;"></div>
<div style="left:27px;top:503px;width:968px;height:1px;background:#d4d4d4;"></div>
<div style="left:27px;top:523px;width:968px;height:1px;background:#d4d4d4;"></div>
<div style="left:27px;top:543px;width:968px;height:1px;background:#d4d4d4;"></div>
<div style="left:27px;top:563px;width:968px;height:1px;background:#d4d4d4;"></div>
<div style="left:27px;top:583px;width:968px;height:1px;background:#d4d4d4;"></div>
<div style="left:27px;top:603px;width:968px;height:1px;background:#d4d4d4;"></div>
<div style="left:27px;top:623px;width:968px;height:1px;background:#d4d4d4;"></div>
<div style="left:27px;top:643px;width:968px;height:1px;background:#d4d4d4;"></div>
<div style="left:27px;top:663px;width:968px;height:1px;background:#d4d4d4;"></div>
<div style="left:137px;top:224px;width:1px;height:442px;background:#d4d4d4;"></div>
<div style="left:290px;top:224px;width:1px;height:442px;background:#d4d4d4;"></div>
<div style="left:443px;top:224px;width:1px;height:442px;background:#d4d4d4;"></div>
<div style="left:592px;top:224px;width:1px;height:442px;background:#d4d4d4;"></div>
<div style="left:742px;top:224px;width:1px;height:442px;background:#d4d4d4;"></div>
<div style="left:806px;top:224px;width:1px;height:442px;background:#d4d4d4;"></div>
<div style="left:870px;top:224px;width:1px;height:442px;background:#d4d4d4;"></div>
<div style="left:934px;top:224px;width:1px;height:442px;background:#d4d4d4;"></div>
<div style="left:27px;top:224px;width:715px;height:39px;background:#70d244;"></div>
<div style="left:27px;top:264px;width:110px;height:299px;background:#ffc000;"></div>
<div style="left:27px;top:364px;width:968px;height:19px;background:#c6c6c6;"></div>
<div style="left:27px;top:364px;width:110px;height:19px;background:#d69700;"></div>
<div style="left:742px;top:364px;width:1px;height:19px;background:#b0b0b0;"></div>
<div style="left:806px;top:364px;width:1px;height:19px;background:#b0b0b0;"></div>
<div style="left:870px;top:364px;width:1px;height:19px;background:#b0b0b0;"></div>
<div style="left:934px;top:364px;width:1px;height:19px;background:#b0b0b0;"></div>
<div style="left:27px;top:404px;width:968px;height:19px;background:#c6c6c6;"></div>
<div style="left:27px;top:404px;width:110px;height:19px;background:#d69700;"></div>
<div style="left:742px;top:404px;width:1px;height:19px;background:#b0b0b0;"></div>
<div style="left:806px;top:404px;width:1px;height:19px;background:#b0b0b0;"></div>
<div style="left:870px;top:404px;width:1px;height:19px;background:#b0b0b0;"></div>
<div style="left:934px;top:404px;width:1px;height:19px;background:#b0b0b0;"></div>
<div style="left:27px;top:444px;width:968px;height:19px;background:#c6c6c6;"></div>
<div style="left:27px;top:444px;width:110px;height:19px;background:#d69700;"></div>
<div style="left:742px;top:444px;width:1px;height:19px;background:#b0b0b0;"></div>
<div style="left:806px;top:444px;width:1px;height:19px;background:#b0b0b0;"></div>
<div style="left:870px;top:444px;width:1px;height:19px;background:#b0b0b0;"></div>
<div style="left:934px;top:444px;width:1px;height:19px;background:#b0b0b0;"></div>
<div style="left:137px;top:223px;width:1px;height:341px;background:#000;"></div>
<div style="left:290px;top:223px;width:1px;height:341px;background:#000;"></div>
<div style="left:443px;top:223px;width:1px;height:341px;background:#000;"></div>
<div style="left:592px;top:223px;width:1px;height:341px;background:#000;"></div>
<div style="left:742px;top:223px;width:1px;height:341px;background:#000;"></div>
<div style="left:27px;top:263px;width:716px;height:1px;background:#000;"></div>
<div style="left:27px;top:283px;width:716px;height:1px;background:#000;"></div>
<div style="left:27px;top:303px;width:716px;height:1px;background:#000;"></div>
<div style="left:27px;top:323px;width:716px;height:1px;background:#000;"></div>
<div style="left:27px;top:343px;width:716px;height:1px;background:#000;"></div>
<div style="left:27px;top:363px;width:716px;height:1px;background:#000;"></div>
<div style="left:27px;top:383px;width:716px;height:1px;background:#000;"></div>
<div style="left:27px;top:403px;width:716px;height:1px;background:#000;"></div>
<div style="left:27px;top:423px;width:716px;height:1px;background:#000;"></div>
<div style="left:27px;top:443px;width:716px;height:1px;background:#000;"></div>
<div style="left:27px;top:463px;width:716px;height:1px;background:#000;"></div>
<div style="left:27px;top:483px;width:716px;height:1px;background:#000;"></div>
<div style="left:27px;top:503px;width:716px;height:1px;background:#000;"></div>
<div style="left:27px;top:523px;width:716px;height:1px;background:#000;"></div>
<div style="left:27px;top:543px;width:716px;height:1px;background:#000;"></div>
<div style="left:27px;top:563px;width:716px;height:1px;background:#000;"></div>
<div style="left:27px;top:222px;width:0px;height:0px;"></div>
<div style="left:27px;top:364px;width:968px;height:1px;background:#fff;"></div>
<div style="left:27px;top:382px;width:968px;height:1px;background:#fff;"></div>
<div style="left:27px;top:364px;width:1px;height:19px;background:#fff;"></div>
<div style="left:994px;top:364px;width:1px;height:19px;background:#fff;"></div>
<div style="left:27px;top:404px;width:968px;height:1px;background:#fff;"></div>
<div style="left:27px;top:422px;width:968px;height:1px;background:#fff;"></div>
<div style="left:27px;top:404px;width:1px;height:19px;background:#fff;"></div>
<div style="left:994px;top:404px;width:1px;height:19px;background:#fff;"></div>
<div style="left:27px;top:444px;width:968px;height:1px;background:#fff;"></div>
<div style="left:27px;top:462px;width:968px;height:1px;background:#fff;"></div>
<div style="left:27px;top:444px;width:1px;height:19px;background:#fff;"></div>
<div style="left:994px;top:444px;width:1px;height:19px;background:#fff;"></div>
<div style="left:28px;top:445px;width:109px;height:17px;background:#ffc000;border:1px solid #017340;"></div>
<div class="t" style="left:29.50px;top:228.32px;font-size:13.8px;line-height:13.8px;color:#000;font-weight:normal;font-style:normal;font-family:'Liberation Sans', sans-serif;">Торговая точка/</div>
<div class="t" style="left:29.50px;top:248.32px;font-size:13.8px;line-height:13.8px;color:#000;font-weight:normal;font-style:normal;font-family:'Liberation Sans', sans-serif;">Дата</div>
<div class="t" style="left:140.50px;top:228.32px;font-size:13.8px;line-height:13.8px;color:#000;font-weight:normal;font-style:normal;letter-spacing:-0.005px;font-family:'Liberation Sans', sans-serif;">Продажи по Торговой</div>
<div class="t" style="left:140.50px;top:248.32px;font-size:13.8px;line-height:13.8px;color:#000;font-weight:normal;font-style:normal;letter-spacing:-0.187px;font-family:'Liberation Sans', sans-serif;">точке 1, тыс. руб.</div>
<div class="t" style="left:293.50px;top:228.32px;font-size:13.8px;line-height:13.8px;color:#000;font-weight:normal;font-style:normal;letter-spacing:-0.005px;font-family:'Liberation Sans', sans-serif;">Продажи по Торговой</div>
<div class="t" style="left:293.50px;top:248.32px;font-size:13.8px;line-height:13.8px;color:#000;font-weight:normal;font-style:normal;letter-spacing:-0.187px;font-family:'Liberation Sans', sans-serif;">точке 2, тыс. руб.</div>
<div class="t" style="left:446.50px;top:228.32px;font-size:13.8px;line-height:13.8px;color:#000;font-weight:normal;font-style:normal;letter-spacing:-0.005px;font-family:'Liberation Sans', sans-serif;">Продажи по Торговой</div>
<div class="t" style="left:446.50px;top:248.32px;font-size:13.8px;line-height:13.8px;color:#000;font-weight:normal;font-style:normal;letter-spacing:-0.187px;font-family:'Liberation Sans', sans-serif;">точке 3, тыс. руб.</div>
<div class="t" style="left:595.50px;top:228.32px;font-size:13.8px;line-height:13.8px;color:#000;font-weight:normal;font-style:normal;letter-spacing:-0.005px;font-family:'Liberation Sans', sans-serif;">Продажи по Торговой</div>
<div class="t" style="left:595.50px;top:248.32px;font-size:13.8px;line-height:13.8px;color:#000;font-weight:normal;font-style:normal;letter-spacing:-0.187px;font-family:'Liberation Sans', sans-serif;">точке 4, тыс. руб.</div>
<div class="t" style="left:71.70px;top:268.00px;font-size:13px;line-height:13px;color:#000;font-weight:normal;font-style:normal;letter-spacing:-0.253px;font-family:'Liberation Sans', sans-serif;">01.06.2019</div>
<div class="t" style="left:140.30px;top:268.76px;font-size:12.8px;line-height:12.8px;color:#000;font-weight:normal;font-style:normal;font-family:'Liberation Sans', sans-serif;">25.223</div>
<div class="t" style="left:293.30px;top:268.76px;font-size:12.8px;line-height:12.8px;color:#000;font-weight:normal;font-style:normal;font-family:'Liberation Sans', sans-serif;">33.224</div>
<div class="t" style="left:446.30px;top:268.76px;font-size:12.8px;line-height:12.8px;color:#000;font-weight:normal;font-style:normal;font-family:'Liberation Sans', sans-serif;">14.557</div>
<div class="t" style="left:595.30px;top:268.76px;font-size:12.8px;line-height:12.8px;color:#000;font-weight:normal;font-style:normal;font-family:'Liberation Sans', sans-serif;">24.334</div>
<div class="t" style="left:71.70px;top:288.00px;font-size:13px;line-height:13px;color:#000;font-weight:normal;font-style:normal;letter-spacing:-0.253px;font-family:'Liberation Sans', sans-serif;">02.06.2019</div>
<div class="t" style="left:140.30px;top:288.76px;font-size:12.8px;line-height:12.8px;color:#000;font-weight:normal;font-style:normal;font-family:'Liberation Sans', sans-serif;">25.475</div>
<div class="t" style="left:293.30px;top:288.76px;font-size:12.8px;line-height:12.8px;color:#000;font-weight:normal;font-style:normal;font-family:'Liberation Sans', sans-serif;">33.722</div>
<div class="t" style="left:446.30px;top:288.76px;font-size:12.8px;line-height:12.8px;color:#000;font-weight:normal;font-style:normal;font-family:'Liberation Sans', sans-serif;">14.673</div>
<div class="t" style="left:595.30px;top:288.76px;font-size:12.8px;line-height:12.8px;color:#000;font-weight:normal;font-style:normal;font-family:'Liberation Sans', sans-serif;">24.456</div>
<div class="t" style="left:71.70px;top:308.00px;font-size:13px;line-height:13px;color:#000;font-weight:normal;font-style:normal;letter-spacing:-0.253px;font-family:'Liberation Sans', sans-serif;">03.06.2019</div>
<div class="t" style="left:140.30px;top:308.76px;font-size:12.8px;line-height:12.8px;color:#000;font-weight:normal;font-style:normal;font-family:'Liberation Sans', sans-serif;">25.73</div>
<div class="t" style="left:293.30px;top:308.76px;font-size:12.8px;line-height:12.8px;color:#000;font-weight:normal;font-style:normal;font-family:'Liberation Sans', sans-serif;">34.228</div>
<div class="t" style="left:446.30px;top:308.76px;font-size:12.8px;line-height:12.8px;color:#000;font-weight:normal;font-style:normal;font-family:'Liberation Sans', sans-serif;">14.791</div>
<div class="t" style="left:595.30px;top:308.76px;font-size:12.8px;line-height:12.8px;color:#000;font-weight:normal;font-style:normal;font-family:'Liberation Sans', sans-serif;">24.578</div>
<div class="t" style="left:71.70px;top:328.00px;font-size:13px;line-height:13px;color:#000;font-weight:normal;font-style:normal;letter-spacing:-0.253px;font-family:'Liberation Sans', sans-serif;">04.06.2019</div>
<div class="t" style="left:140.30px;top:328.76px;font-size:12.8px;line-height:12.8px;color:#000;font-weight:normal;font-style:normal;font-family:'Liberation Sans', sans-serif;">25.987</div>
<div class="t" style="left:293.30px;top:328.76px;font-size:12.8px;line-height:12.8px;color:#000;font-weight:normal;font-style:normal;font-family:'Liberation Sans', sans-serif;">34.742</div>
<div class="t" style="left:446.30px;top:328.76px;font-size:12.8px;line-height:12.8px;color:#000;font-weight:normal;font-style:normal;font-family:'Liberation Sans', sans-serif;">14.909</div>
<div class="t" style="left:595.30px;top:328.76px;font-size:12.8px;line-height:12.8px;color:#000;font-weight:normal;font-style:normal;font-family:'Liberation Sans', sans-serif;">24.701</div>
<div class="t" style="left:71.70px;top:348.00px;font-size:13px;line-height:13px;color:#000;font-weight:normal;font-style:normal;letter-spacing:-0.253px;font-family:'Liberation Sans', sans-serif;">05.06.2019</div>
<div class="t" style="left:140.30px;top:348.76px;font-size:12.8px;line-height:12.8px;color:#000;font-weight:normal;font-style:normal;font-family:'Liberation Sans', sans-serif;">26.247</div>
<div class="t" style="left:293.30px;top:348.76px;font-size:12.8px;line-height:12.8px;color:#000;font-weight:normal;font-style:normal;font-family:'Liberation Sans', sans-serif;">35.263</div>
<div class="t" style="left:446.30px;top:348.76px;font-size:12.8px;line-height:12.8px;color:#000;font-weight:normal;font-style:normal;font-family:'Liberation Sans', sans-serif;">15.028</div>
<div class="t" style="left:595.30px;top:348.76px;font-size:12.8px;line-height:12.8px;color:#000;font-weight:normal;font-style:normal;font-family:'Liberation Sans', sans-serif;">24.824</div>
<div class="t" style="left:71.70px;top:368.00px;font-size:13px;line-height:13px;color:#000;font-weight:normal;font-style:normal;letter-spacing:-0.253px;font-family:'Liberation Sans', sans-serif;">06.06.2019</div>
<div class="t" style="left:140.30px;top:368.76px;font-size:12.8px;line-height:12.8px;color:#000;font-weight:normal;font-style:normal;font-family:'Liberation Sans', sans-serif;">26.51</div>
<div class="t" style="left:293.30px;top:368.76px;font-size:12.8px;line-height:12.8px;color:#000;font-weight:normal;font-style:normal;font-family:'Liberation Sans', sans-serif;">35.792</div>
<div class="t" style="left:446.30px;top:368.76px;font-size:12.8px;line-height:12.8px;color:#000;font-weight:normal;font-style:normal;font-family:'Liberation Sans', sans-serif;">15.149</div>
<div class="t" style="left:595.30px;top:368.76px;font-size:12.8px;line-height:12.8px;color:#000;font-weight:normal;font-style:normal;font-family:'Liberation Sans', sans-serif;">24.948</div>
<div class="t" style="left:71.70px;top:388.00px;font-size:13px;line-height:13px;color:#000;font-weight:normal;font-style:normal;letter-spacing:-0.253px;font-family:'Liberation Sans', sans-serif;">07.06.2019</div>
<div class="t" style="left:140.30px;top:388.76px;font-size:12.8px;line-height:12.8px;color:#000;font-weight:normal;font-style:normal;font-family:'Liberation Sans', sans-serif;">26.775</div>
<div class="t" style="left:293.30px;top:388.76px;font-size:12.8px;line-height:12.8px;color:#000;font-weight:normal;font-style:normal;font-family:'Liberation Sans', sans-serif;">36.329</div>
<div class="t" style="left:446.30px;top:388.76px;font-size:12.8px;line-height:12.8px;color:#000;font-weight:normal;font-style:normal;font-family:'Liberation Sans', sans-serif;">15.27</div>
<div class="t" style="left:595.30px;top:388.76px;font-size:12.8px;line-height:12.8px;color:#000;font-weight:normal;font-style:normal;font-family:'Liberation Sans', sans-serif;">25.073</div>
<div class="t" style="left:71.70px;top:408.00px;font-size:13px;line-height:13px;color:#000;font-weight:normal;font-style:normal;letter-spacing:-0.253px;font-family:'Liberation Sans', sans-serif;">08.06.2019</div>
<div class="t" style="left:140.30px;top:408.76px;font-size:12.8px;line-height:12.8px;color:#000;font-weight:normal;font-style:normal;font-family:'Liberation Sans', sans-serif;">27.042</div>
<div class="t" style="left:293.30px;top:408.76px;font-size:12.8px;line-height:12.8px;color:#000;font-weight:normal;font-style:normal;font-family:'Liberation Sans', sans-serif;">36.873</div>
<div class="t" style="left:446.30px;top:408.76px;font-size:12.8px;line-height:12.8px;color:#000;font-weight:normal;font-style:normal;font-family:'Liberation Sans', sans-serif;">15.392</div>
<div class="t" style="left:595.30px;top:408.76px;font-size:12.8px;line-height:12.8px;color:#000;font-weight:normal;font-style:normal;font-family:'Liberation Sans', sans-serif;">25.199</div>
<div class="t" style="left:71.70px;top:428.00px;font-size:13px;line-height:13px;color:#000;font-weight:normal;font-style:normal;letter-spacing:-0.253px;font-family:'Liberation Sans', sans-serif;">09.06.2019</div>
<div class="t" style="left:140.30px;top:428.76px;font-size:12.8px;line-height:12.8px;color:#000;font-weight:normal;font-style:normal;font-family:'Liberation Sans', sans-serif;">27.313</div>
<div class="t" style="left:293.30px;top:428.76px;font-size:12.8px;line-height:12.8px;color:#000;font-weight:normal;font-style:normal;font-family:'Liberation Sans', sans-serif;">37.427</div>
<div class="t" style="left:446.30px;top:428.76px;font-size:12.8px;line-height:12.8px;color:#000;font-weight:normal;font-style:normal;font-family:'Liberation Sans', sans-serif;">15.515</div>
<div class="t" style="left:595.30px;top:428.76px;font-size:12.8px;line-height:12.8px;color:#000;font-weight:normal;font-style:normal;font-family:'Liberation Sans', sans-serif;">25.325</div>
<div class="t" style="left:71.70px;top:448.00px;font-size:13px;line-height:13px;color:#000;font-weight:normal;font-style:normal;letter-spacing:-0.253px;font-family:'Liberation Sans', sans-serif;">10.06.2019</div>
<div class="t" style="left:140.30px;top:448.76px;font-size:12.8px;line-height:12.8px;color:#000;font-weight:normal;font-style:normal;font-family:'Liberation Sans', sans-serif;">27.586</div>
<div class="t" style="left:293.30px;top:448.76px;font-size:12.8px;line-height:12.8px;color:#000;font-weight:normal;font-style:normal;font-family:'Liberation Sans', sans-serif;">37.988</div>
<div class="t" style="left:446.30px;top:448.76px;font-size:12.8px;line-height:12.8px;color:#000;font-weight:normal;font-style:normal;font-family:'Liberation Sans', sans-serif;">15.639</div>
<div class="t" style="left:595.30px;top:448.76px;font-size:12.8px;line-height:12.8px;color:#000;font-weight:normal;font-style:normal;font-family:'Liberation Sans', sans-serif;">25.451</div>
<div class="t" style="left:71.70px;top:468.00px;font-size:13px;line-height:13px;color:#000;font-weight:normal;font-style:normal;letter-spacing:-0.145px;font-family:'Liberation Sans', sans-serif;">11.06.2019</div>
<div class="t" style="left:140.30px;top:468.76px;font-size:12.8px;line-height:12.8px;color:#000;font-weight:normal;font-style:normal;font-family:'Liberation Sans', sans-serif;">27.862</div>
<div class="t" style="left:293.30px;top:468.76px;font-size:12.8px;line-height:12.8px;color:#000;font-weight:normal;font-style:normal;font-family:'Liberation Sans', sans-serif;">38.558</div>
<div class="t" style="left:446.30px;top:468.76px;font-size:12.8px;line-height:12.8px;color:#000;font-weight:normal;font-style:normal;font-family:'Liberation Sans', sans-serif;">15.764</div>
<div class="t" style="left:595.30px;top:468.76px;font-size:12.8px;line-height:12.8px;color:#000;font-weight:normal;font-style:normal;font-family:'Liberation Sans', sans-serif;">25.578</div>
<div class="t" style="left:71.70px;top:488.00px;font-size:13px;line-height:13px;color:#000;font-weight:normal;font-style:normal;letter-spacing:-0.253px;font-family:'Liberation Sans', sans-serif;">12.06.2019</div>
<div class="t" style="left:140.30px;top:488.76px;font-size:12.8px;line-height:12.8px;color:#000;font-weight:normal;font-style:normal;font-family:'Liberation Sans', sans-serif;">28.141</div>
<div class="t" style="left:293.30px;top:488.76px;font-size:12.8px;line-height:12.8px;color:#000;font-weight:normal;font-style:normal;font-family:'Liberation Sans', sans-serif;">39.136</div>
<div class="t" style="left:446.30px;top:488.76px;font-size:12.8px;line-height:12.8px;color:#000;font-weight:normal;font-style:normal;font-family:'Liberation Sans', sans-serif;">15.891</div>
<div class="t" style="left:595.30px;top:488.76px;font-size:12.8px;line-height:12.8px;color:#000;font-weight:normal;font-style:normal;font-family:'Liberation Sans', sans-serif;">25.706</div>
<div class="t" style="left:71.70px;top:508.00px;font-size:13px;line-height:13px;color:#000;font-weight:normal;font-style:normal;letter-spacing:-0.253px;font-family:'Liberation Sans', sans-serif;">13.06.2019</div>
<div class="t" style="left:140.30px;top:508.76px;font-size:12.8px;line-height:12.8px;color:#000;font-weight:normal;font-style:normal;font-family:'Liberation Sans', sans-serif;">28.422</div>
<div class="t" style="left:293.30px;top:508.76px;font-size:12.8px;line-height:12.8px;color:#000;font-weight:normal;font-style:normal;font-family:'Liberation Sans', sans-serif;">39.723</div>
<div class="t" style="left:446.30px;top:508.76px;font-size:12.8px;line-height:12.8px;color:#000;font-weight:normal;font-style:normal;font-family:'Liberation Sans', sans-serif;">16.018</div>
<div class="t" style="left:595.30px;top:508.76px;font-size:12.8px;line-height:12.8px;color:#000;font-weight:normal;font-style:normal;font-family:'Liberation Sans', sans-serif;">25.835</div>
<div class="t" style="left:71.70px;top:528.00px;font-size:13px;line-height:13px;color:#000;font-weight:normal;font-style:normal;letter-spacing:-0.253px;font-family:'Liberation Sans', sans-serif;">14.06.2019</div>
<div class="t" style="left:140.30px;top:528.76px;font-size:12.8px;line-height:12.8px;color:#000;font-weight:normal;font-style:normal;font-family:'Liberation Sans', sans-serif;">28.706</div>
<div class="t" style="left:293.30px;top:528.76px;font-size:12.8px;line-height:12.8px;color:#000;font-weight:normal;font-style:normal;font-family:'Liberation Sans', sans-serif;">40.319</div>
<div class="t" style="left:446.30px;top:528.76px;font-size:12.8px;line-height:12.8px;color:#000;font-weight:normal;font-style:normal;font-family:'Liberation Sans', sans-serif;">16.146</div>
<div class="t" style="left:595.30px;top:528.76px;font-size:12.8px;line-height:12.8px;color:#000;font-weight:normal;font-style:normal;font-family:'Liberation Sans', sans-serif;">25.964</div>
<div class="t" style="left:71.70px;top:548.00px;font-size:13px;line-height:13px;color:#000;font-weight:normal;font-style:normal;letter-spacing:-0.253px;font-family:'Liberation Sans', sans-serif;">15.06.2019</div>
<div class="t" style="left:140.30px;top:548.76px;font-size:12.8px;line-height:12.8px;color:#000;font-weight:normal;font-style:normal;font-family:'Liberation Sans', sans-serif;">28.993</div>
<div class="t" style="left:293.30px;top:548.76px;font-size:12.8px;line-height:12.8px;color:#000;font-weight:normal;font-style:normal;font-family:'Liberation Sans', sans-serif;">40.924</div>
<div class="t" style="left:446.30px;top:548.76px;font-size:12.8px;line-height:12.8px;color:#000;font-weight:normal;font-style:normal;font-family:'Liberation Sans', sans-serif;">16.275</div>
<div class="t" style="left:595.30px;top:548.76px;font-size:12.8px;line-height:12.8px;color:#000;font-weight:normal;font-style:normal;font-family:'Liberation Sans', sans-serif;">26.094</div>
<div style="left:995px;top:204px;width:1px;height:462px;background:#ababab;"></div>
<div style="left:999px;top:206px;width:15px;height:15px;background:#fff;border:1px solid #ababab;"></div>
<svg style="left:1002px;top:211px" width="9" height="5" viewBox="0 0 9 5"><path d="M0 5h9L4.5 0z" fill="#666"/></svg>
<div style="left:999px;top:221px;width:15px;height:410px;background:#fff;border:1px solid #ababab;"></div>
<div style="left:999px;top:631px;width:15px;height:21px;background:#e0e0e0;"></div>
<div style="left:999px;top:652px;width:15px;height:15px;background:#fff;border:1px solid #ababab;"></div>
<svg style="left:1002px;top:658px" width="9" height="5" viewBox="0 0 9 5"><path d="M0 0h9L4.5 5z" fill="#666"/></svg>
<div style="left:0px;top:666px;width:1018px;height:1px;background:#ababab;"></div>
<svg style="left:27px;top:675px" width="6" height="9" viewBox="0 0 6 9"><path d="M5.5 0v9L0.5 4.5z" fill="#c0c0c0"/></svg>
<svg style="left:56px;top:675px" width="6" height="9" viewBox="0 0 6 9"><path d="M0.5 0v9l5-4.5z" fill="#c0c0c0"/></svg>
<div style="left:101px;top:666px;width:107px;height:26px;background:#fff;border-left:1px solid #ababab;border-right:1px solid #ababab;"></div>
<div style="left:101px;top:689px;width:107px;height:2px;background:#017340;"></div>
<div class="t" style="left:113.60px;top:673.00px;font-size:13px;line-height:13px;color:#017340;font-weight:bold;font-style:normal;letter-spacing:-0.179px;font-family:'Liberation Sans', sans-serif;">microexcel.ru</div>
<svg style="left:240px;top:671px" width="18" height="18" viewBox="0 0 18 18"><circle cx="9" cy="9" r="8" fill="none" stroke="#777" stroke-width="1.2"/><path d="M9 4.5v9M4.5 9h9" stroke="#777" stroke-width="1.6"/></svg>
<div style="left:610px;top:675px;width:2px;height:2px;background:#9b9b9b;border-radius:1px;"></div>
<div style="left:610px;top:679px;width:2px;height:2px;background:#9b9b9b;border-radius:1px;"></div>
<div style="left:610px;top:683px;width:2px;height:2px;background:#9b9b9b;border-radius:1px;"></div>
<div style="left:627px;top:673px;width:15px;height:15px;background:#fff;border:1px solid #ababab;"></div>
<svg style="left:632px;top:676px" width="5" height="9" viewBox="0 0 5 9"><path d="M5 0v9L0 4.5z" fill="#666"/></svg>
<div style="left:641px;top:673px;width:297px;height:15px;background:#fff;border:1px solid #ababab;border-left:2px solid #ababab;"></div>
<div style="left:938px;top:674px;width:42px;height:13px;background:#e0e0e0;"></div>
<div style="left:980px;top:673px;width:16px;height:15px;background:#fff;border:1px solid #ababab;"></div>
<svg style="left:986px;top:676px" width="5" height="9" viewBox="0 0 5 9"><path d="M0 0v9l5-4.5z" fill="#666"/></svg>
<svg style="left:8px;top:696px" width="16" height="17" viewBox="0 0 16 17"><circle cx="3.8" cy="4.5" r="2.9" fill="#6e6e6e"/><rect x="8.2" y="3.2" width="5.8" height="2.6" fill="#6e6e6e"/><path d="M2.5 7.5v7.5h11.5V7.5" fill="none" stroke="#444" stroke-width="1.1"/><path d="M4 9.5h2M7.2 9.5h2M10.4 9.5h2M4 11.5h2M7.2 11.5h2M10.4 11.5h2M4 13.5h2M7.2 13.5h2M10.4 13.5h2" stroke="#444" stroke-width="0.9"/></svg>
<div class="t" style="left:388.90px;top:699.32px;font-size:11.2px;line-height:11.2px;color:#262626;font-weight:normal;font-style:normal;letter-spacing:-0.213px;font-family:'Liberation Sans', sans-serif;">Среднее: 08.06.2019</div>
<div class="t" style="left:509.20px;top:699.32px;font-size:11.2px;line-height:11.2px;color:#262626;font-weight:normal;font-style:normal;letter-spacing:0.027px;font-family:'Liberation Sans', sans-serif;">Количество: 15</div>
<div class="t" style="left:605.50px;top:699.32px;font-size:11.2px;line-height:11.2px;color:#262626;font-weight:normal;font-style:normal;letter-spacing:-0.242px;font-family:'Liberation Sans', sans-serif;">Сумма: 24.04.2258</div>
<div style="left:717px;top:695px;width:38px;height:21px;background:#c6c6c6;"></div>
<svg style="left:728px;top:697px" width="15" height="15" viewBox="0 0 15 15"><path d="M1.5 1.5h12v12h-12zM5.5 1.5v12M9.5 1.5v12M1.5 5.5h12M1.5 9.5h12" fill="none" stroke="#6e6e6e" stroke-width="1.4"/></svg>
<svg style="left:766px;top:697px" width="16" height="15" viewBox="0 0 16 15"><rect x="1.5" y="1.5" width="13" height="12" fill="none" stroke="#6e6e6e" stroke-width="1.2"/><rect x="4.5" y="3.5" width="7" height="8" fill="none" stroke="#6e6e6e"/><path d="M6 5.5h4M6 7.5h4M6 9.5h4" stroke="#6e6e6e"/></svg>
<svg style="left:804px;top:697px" width="16" height="15" viewBox="0 0 16 15"><path d="M1.5 1.5h13v12h-13zM1.5 8.5h8M5 1.5v7M9.5 1.5v7" fill="none" stroke="#6e6e6e" stroke-width="1.2"/></svg>
<div style="left:836px;top:704px;width:6px;height:1.6px;background:#444;"></div>
<div style="left:846px;top:705px;width:100px;height:1px;background:#a0a0a0;"></div>
<div style="left:894px;top:699px;width:5px;height:12px;background:#6e6e6e;"></div>
<div style="left:949.3px;top:704.2px;width:7.5px;height:1.8px;background:#555;"></div>
<div style="left:952.15px;top:701.3px;width:1.8px;height:7.5px;background:#555;"></div>
<div class="t" style="left:968.50px;top:698.87px;font-size:11.5px;line-height:11.5px;color:#262626;font-weight:normal;font-style:normal;letter-spacing:-0.844px;font-family:'Liberation Sans', sans-serif;">100</div>
<div class="t" style="left:988.30px;top:698.87px;font-size:11.5px;line-height:11.5px;color:#262626;font-weight:normal;font-style:normal;font-family:'Liberation Sans', sans-serif;">%</div>
<div style="left:0px;top:66px;width:1px;height:651px;background:#017340;"></div>
<div style="left:1017px;top:66px;width:1px;height:651px;background:#017340;"></div>
<div style="left:0px;top:716px;width:1018px;height:1px;background:#017340;"></div>
<div style="left:1px;top:362px;width:25px;height:24px;border:3px solid #ff0000;border-radius:6px;"></div>
<div style="left:0px;top:401px;width:25px;height:24px;border:3px solid #ff0000;border-radius:6px;"></div>
<div style="left:1px;top:441px;width:25px;height:24px;border:3px solid #ff0000;border-radius:6px;"></div>
</body></html>
